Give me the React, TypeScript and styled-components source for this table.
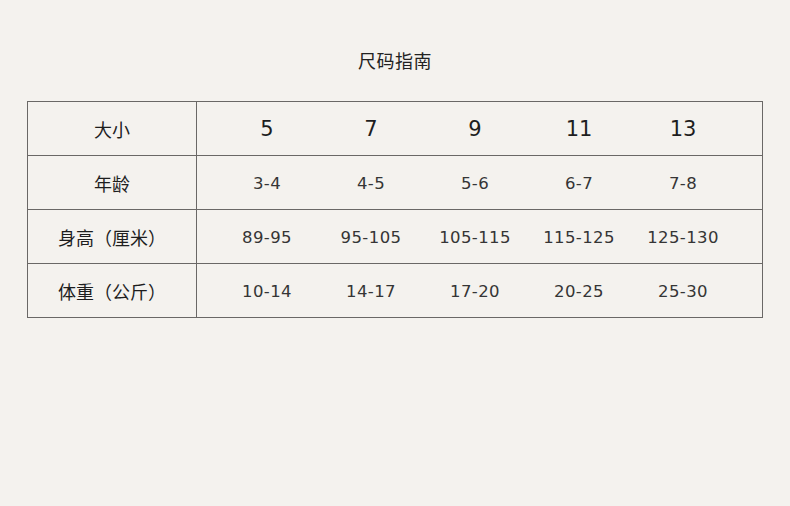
import styled, { createGlobalStyle } from "styled-components";

const GlobalStyle = createGlobalStyle`
	html, body {
		margin: 0;
		padding: 0;
		background-color: #f4f2ee;
	}
`;

const Page = styled.div`
	width: 790px;
	height: 506px;
	box-sizing: border-box;
	padding-top: 46px;
	background-color: #f4f2ee;
	font-family: "Noto Sans CJK SC", "Noto Sans", sans-serif;
	color: #222;
`;

const Title = styled.h1`
	margin: 0 0 26px 0;
	font-size: 18px;
	font-weight: 400;
	line-height: 29px;
	text-align: center;
	letter-spacing: 0.5px;
`;

const Table = styled.div`
	margin-left: 27px;
	width: 736px;
	box-sizing: border-box;
	border: 1px solid #6a6866;
	border-bottom: none;
`;

const Row = styled.div`
	display: flex;
	height: 54px;
	box-sizing: border-box;
	border-bottom: 1px solid #6a6866;
`;

const Label = styled.div`
	width: 168px;
	flex-shrink: 0;
	border-right: 1px solid #6a6866;
	display: flex;
	align-items: center;
	justify-content: center;
	font-size: 18px;
	color: #1e1e1e;
`;

const Cells = styled.div`
	display: grid;
	grid-template-columns: repeat(5, 104px);
	padding-left: 18px;
	align-items: center;
`;

const Cell = styled.div<{ $big?: boolean }>`
	text-align: center;
	font-family: "DejaVu Sans", "Noto Sans", sans-serif;
	font-size: ${(p) => (p.$big ? "21px" : "16.5px")};
	color: ${(p) => (p.$big ? "#1e1e1e" : "#353535")};
	letter-spacing: ${(p) => (p.$big ? "0" : "0.4px")};
	padding-top: 1px;
`;

const rows = [
	{ label: "大小", values: ["5", "7", "9", "11", "13"], big: true },
	{ label: "年龄", values: ["3-4", "4-5", "5-6", "6-7", "7-8"] },
	{ label: "身高（厘米）", values: ["89-95", "95-105", "105-115", "115-125", "125-130"] },
	{ label: "体重（公斤）", values: ["10-14", "14-17", "17-20", "20-25", "25-30"] },
];

function App() {
	return <Page>
		<GlobalStyle />
		<Title>尺码指南</Title>
		<Table>
			{rows.map((r) => (
				<Row key={r.label}>
					<Label>{r.label}</Label>
					<Cells>
						{r.values.map((v) => (
							<Cell key={v} $big={r.big}>{v}</Cell>
						))}
					</Cells>
				</Row>
			))}
		</Table>
	</Page>
}

export default App;
